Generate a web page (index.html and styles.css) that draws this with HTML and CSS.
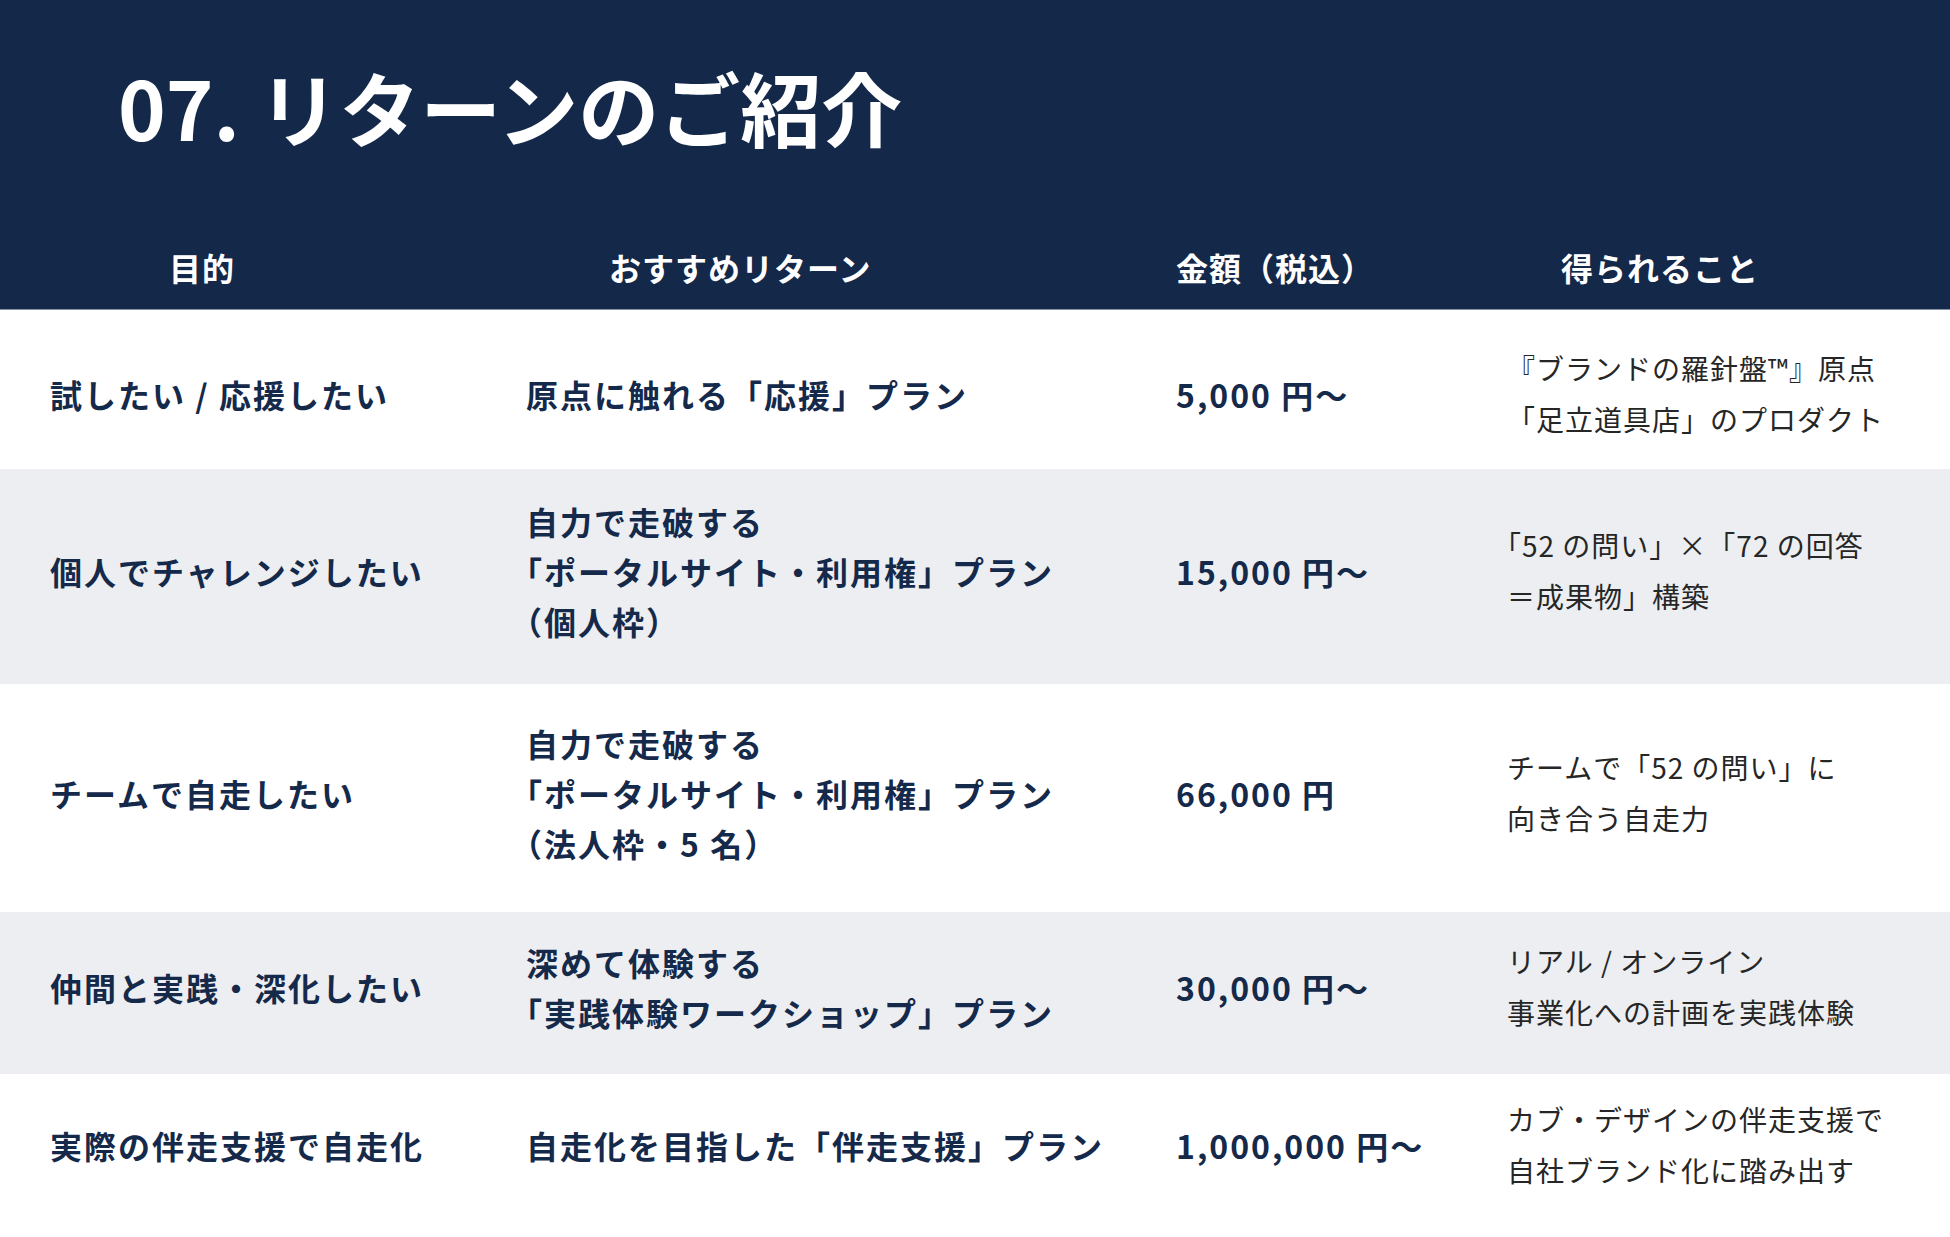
FILE: index.html
```html
<!DOCTYPE html>
<html lang="ja">
<head>
<meta charset="utf-8">
<title>07. リターンのご紹介</title>
<link rel="stylesheet" href="styles.css">
</head>
<body>
<header class="hero">
  <h1 class="title">07. リターンのご紹介</h1>
  <div class="row thead">
    <div class="th th-purpose">目的</div>
    <div class="th th-plan">おすすめリターン</div>
    <div class="th th-price">金額（税込）</div>
    <div class="th th-gain">得られること</div>
  </div>
</header>
<main class="tbody">
  <div class="row r1">
    <div class="cell purpose">試したい / 応援したい</div>
    <div class="cell plan">原点に触れる「応援」プラン</div>
    <div class="cell price">5,000 円〜</div>
    <div class="cell gain">『ブランドの羅針盤™』原点<br>「足立道具店」のプロダクト</div>
  </div>
  <div class="row r2 alt">
    <div class="cell purpose">個人でチャレンジしたい</div>
    <div class="cell plan">自力で走破する<br><span class="ob">「</span>ポータルサイト・利用権」プラン<br><span class="ob">（</span>個人枠）</div>
    <div class="cell price">15,000 円〜</div>
    <div class="cell gain"><span class="ob">「</span>52 の問い」×「72 の回答<br>＝成果物」構築</div>
  </div>
  <div class="row r3">
    <div class="cell purpose">チームで自走したい</div>
    <div class="cell plan">自力で走破する<br><span class="ob">「</span>ポータルサイト・利用権」プラン<br><span class="ob">（</span>法人枠・5 名）</div>
    <div class="cell price">66,000 円</div>
    <div class="cell gain">チームで「52 の問い」に<br>向き合う自走力</div>
  </div>
  <div class="row r4 alt">
    <div class="cell purpose">仲間と実践・深化したい</div>
    <div class="cell plan">深めて体験する<br><span class="ob">「</span>実践体験ワークショップ」プラン</div>
    <div class="cell price">30,000 円〜</div>
    <div class="cell gain">リアル / オンライン<br>事業化への計画を実践体験</div>
  </div>
  <div class="row r5">
    <div class="cell purpose">実際の伴走支援で自走化</div>
    <div class="cell plan">自走化を目指した「伴走支援」プラン</div>
    <div class="cell price">1,000,000 円〜</div>
    <div class="cell gain">カブ・デザインの伴走支援で<br>自社ブランド化に踏み出す</div>
  </div>
</main>
</body>
</html>
```
FILE: styles.css
```css
* { box-sizing: border-box; }
html, body {
  margin: 0;
  padding: 0;
  width: 1950px;
  height: 1237px;
  overflow: hidden;
  background: #ffffff;
  font-family: "Noto Sans CJK JP", "Noto Sans", sans-serif;
}

.hero {
  background: #14284a;
  height: 310px;
  border-bottom: 1px solid #8393a8;
  display: flex;
  flex-direction: column;
}

.title {
  margin: 0;
  padding: 64px 0 0 118px;
  font-size: 81px;
  line-height: 84px;
  font-weight: 700;
  color: #ffffff;
}

.row {
  display: grid;
  grid-template-columns: 476px 650px 332px 1fr;
  align-items: center;
}

.thead {
  margin-top: auto;
  height: 82px;
  padding-bottom: 3px;
}

.th {
  color: #ffffff;
  font-size: 32px;
  font-weight: 700;
  letter-spacing: 1px;
  line-height: 40px;
}
.th-purpose { padding-left: 169px; }
.th-plan { padding-left: 133px; }
.th-price { padding-left: 50px; }
.th-gain { padding-left: 103px; }

.tbody {
  display: flex;
  flex-direction: column;
}

.r1 { height: 159px; padding-top: 8px; }
.r2 { height: 215px; padding-bottom: 12px; }
.r3 { height: 228px; padding-bottom: 10px; }
.r4 { height: 162px; padding-bottom: 12px; }
.r5 { height: 163px; padding-bottom: 22px; }
.alt { background: #eceef1; }

.cell {
  padding-left: 50px;
  color: #15294a;
  font-size: 32px;
  font-weight: 700;
  letter-spacing: 2px;
  line-height: 50px;
}

.cell.gain {
  padding-left: 49px;
  color: #262626;
  font-size: 28px;
  font-weight: 400;
  letter-spacing: 1px;
  line-height: 51px;
}

.ob { margin-left: -0.5em; }
```
